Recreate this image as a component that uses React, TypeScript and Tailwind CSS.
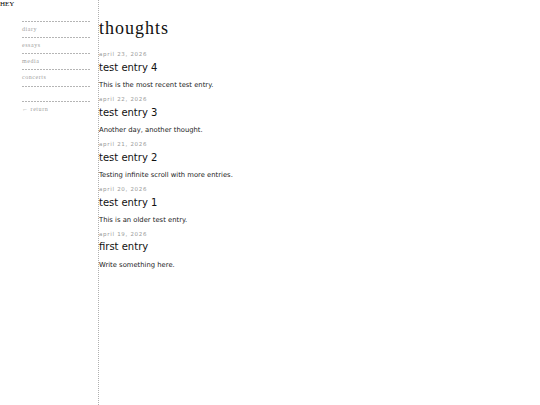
import React from "react";

const entries = [
  { date: "april 23, 2026", title: "test entry 4", body: "This is the most recent test entry." },
  { date: "april 22, 2026", title: "test entry 3", body: "Another day, another thought." },
  { date: "april 21, 2026", title: "test entry 2", body: "Testing infinite scroll with more entries." },
  { date: "april 20, 2026", title: "test entry 1", body: "This is an older test entry." },
  { date: "april 19, 2026", title: "first entry", body: "Write something here." },
];

const nav = ["diary", "essays", "media", "concerts"];

function Dash() {
  return (
    <div className="h-px w-full bg-[repeating-linear-gradient(to_right,#b5b5b5_0px,#b5b5b5_2px,transparent_2px,transparent_3px)]" />
  );
}

export default function App() {
  return (
    <div className="flex min-h-screen bg-white">
      <aside className="w-[99px] shrink-0 min-h-screen border-r border-dotted border-[#b0b0b0] font-['Liberation_Serif','Times_New_Roman',serif]">
        <div className="text-[7px] leading-[8px] text-black">HEY</div>
        <div className="ml-[22px] w-[68px] mt-[12.5px]">
          {nav.map((n) => (
            <div key={n}>
              <Dash />
              <div className="h-[15.25px] flex items-center text-[6px] tracking-[0.55px] text-[#a0a0a0]">{n}</div>
            </div>
          ))}
          <Dash />
        </div>
        <div className="ml-[22px] w-[68px] mt-[14px]">
          <Dash />
          <div className="h-[16px] flex items-center text-[6px] tracking-[0.55px] text-[#a0a0a0]">← return</div>
        </div>
      </aside>
      <main className="flex-1 pt-[18px] font-['DejaVu_Sans',Verdana,sans-serif]">
        <h1 className="font-['Liberation_Serif','Times_New_Roman',serif] text-[18px] leading-[20px] tracking-[1px] text-[#111] font-normal">
          thoughts
        </h1>
        <div className="mt-[12.2px]">
          {entries.map((e) => (
            <div key={e.title} className="pb-[4.7px]">
              <div className="text-[5.5px] leading-[8px] tracking-[0.7px] text-[#999]">{e.date}</div>
              <div className="mt-[3.7px] text-[10px] leading-[12px] text-[#111]">{e.title}</div>
              <div className="mt-[7.5px] text-[6.8px] leading-[9px] text-[#222]">{e.body}</div>
            </div>
          ))}
        </div>
      </main>
    </div>
  );
}
